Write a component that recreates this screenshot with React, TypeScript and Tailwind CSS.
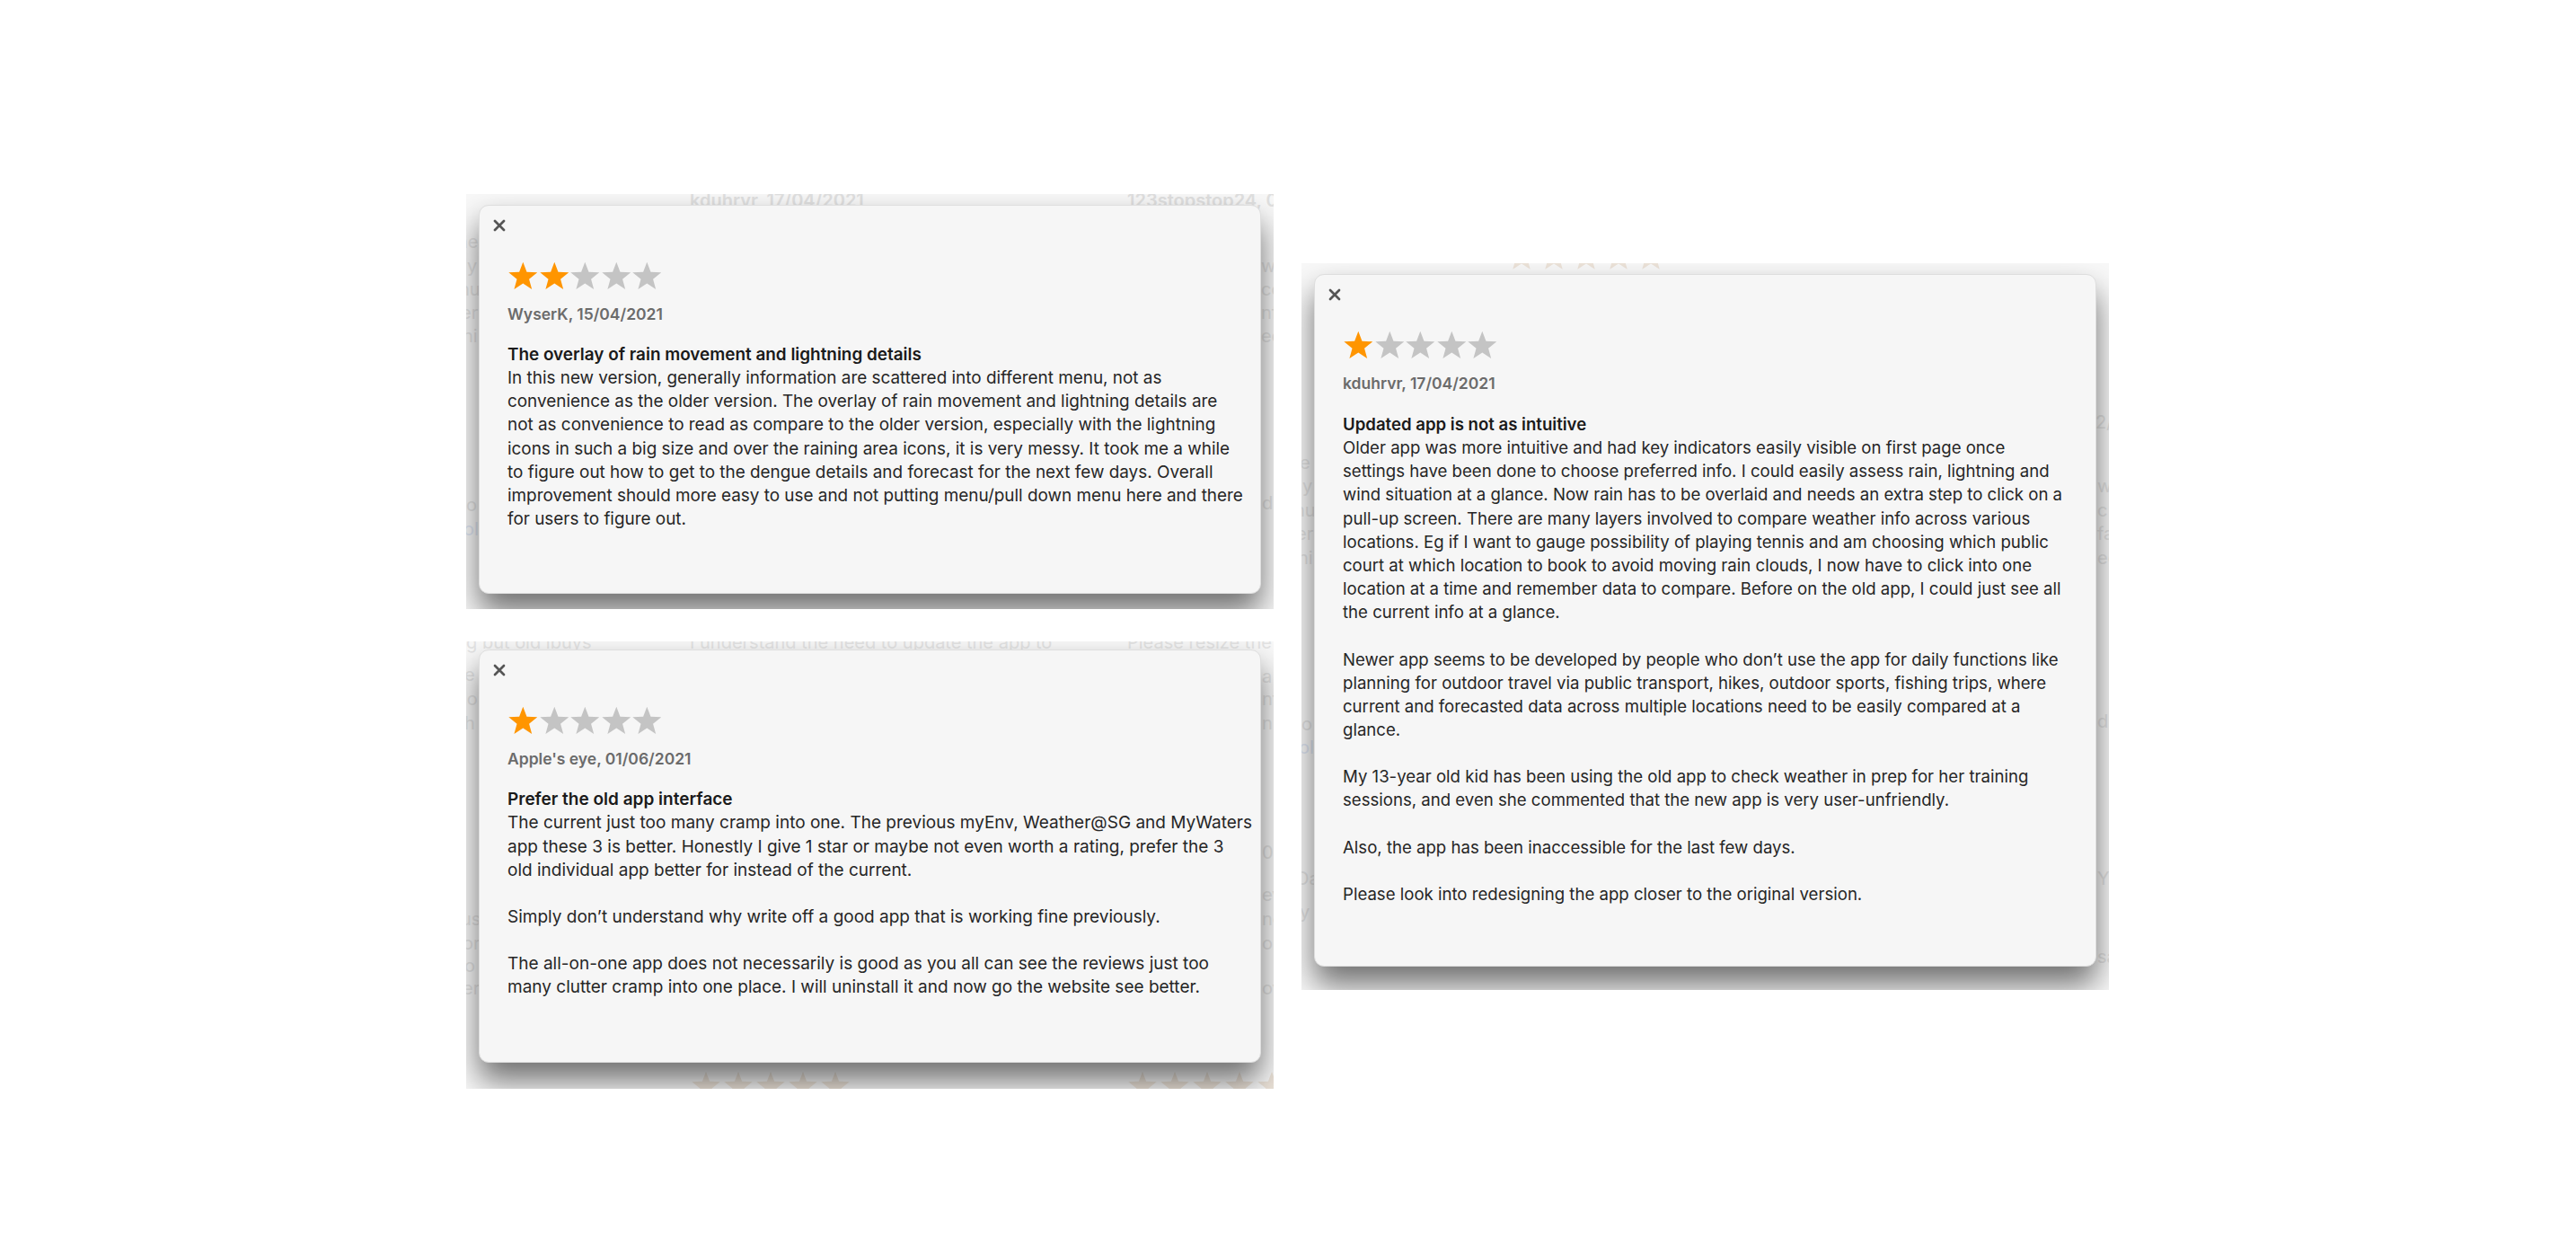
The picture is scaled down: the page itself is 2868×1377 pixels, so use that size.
import React from "react";

type Review = {
  rating: number;
  meta: string;
  title: string;
  lines: string[];
};

type Frag = { t: string; x: number; y: number; bold?: boolean; blue?: boolean };

const reviews: Record<string, Review> = {
  a: {
    rating: 2,
    meta: "WyserK, 15/04/2021",
    title: "The overlay of rain movement and lightning details",
    lines: [
      "In this new version, generally information are scattered into different menu, not as",
      "convenience as the older version. The overlay of rain movement and lightning details are",
      "not as convenience to read as compare to the older version, especially with the lightning",
      "icons in such a big size and over the raining area icons, it is very messy. It took me a while",
      "to figure out how to get to the dengue details and forecast for the next few days. Overall",
      "improvement should more easy to use and not putting menu/pull down menu here and there",
      "for users to figure out.",
    ],
  },
  b: {
    rating: 1,
    meta: "Apple's eye, 01/06/2021",
    title: "Prefer the old app interface",
    lines: [
      "The current just too many cramp into one. The previous myEnv, Weather@SG and MyWaters",
      "app these 3 is better. Honestly I give 1 star or maybe not even worth a rating, prefer the 3",
      "old individual app better for instead of the current.",
      "",
      "Simply don\u2019t understand why write off a good app that is working fine previously.",
      "",
      "The all-on-one app does not necessarily is good as you all can see the reviews just too",
      "many clutter cramp into one place. I will uninstall it and now go the website see better.",
    ],
  },
  c: {
    rating: 1,
    meta: "kduhrvr, 17/04/2021",
    title: "Updated app is not as intuitive",
    lines: [
      "Older app was more intuitive and had key indicators easily visible on first page once",
      "settings have been done to choose preferred info. I could easily assess rain, lightning and",
      "wind situation at a glance. Now rain has to be overlaid and needs an extra step to click on a",
      "pull-up screen. There are many layers involved to compare weather info across various",
      "locations. Eg if I want to gauge possibility of playing tennis and am choosing which public",
      "court at which location to book to avoid moving rain clouds, I now have to click into one",
      "location at a time and remember data to compare. Before on the old app, I could just see all",
      "the current info at a glance.",
      "",
      "Newer app seems to be developed by people who don\u2019t use the app for daily functions like",
      "planning for outdoor travel via public transport, hikes, outdoor sports, fishing trips, where",
      "current and forecasted data across multiple locations need to be easily compared at a",
      "glance.",
      "",
      "My 13-year old kid has been using the old app to check weather in prep for her training",
      "sessions, and even she commented that the new app is very user-unfriendly.",
      "",
      "Also, the app has been inaccessible for the last few days.",
      "",
      "Please look into redesigning the app closer to the original version.",
    ],
  },
};

const STAR = "17.5,0.5 21.73,11.68 33.67,12.25 24.35,19.72 27.49,31.25 17.5,24.7 7.51,31.25 10.65,19.72 1.33,12.25 13.27,11.68";

function Star({ filled }: { filled: boolean }) {
  return (
    <svg viewBox="0 0 35 32" className="w-[34.6px] h-[32px] shrink-0">
      <polygon points={STAR} fill={filled ? "#ff9500" : "#c4c4c4"} />
    </svg>
  );
}

function CloseIcon() {
  return (
    <svg viewBox="0 0 14 14" className="w-[14px] h-[14px]">
      <path d="M2 2 L12 12 M12 2 L2 12" stroke="#555555" strokeWidth="2.7" strokeLinecap="round" />
    </svg>
  );
}

function Card({ r, body, pb }: { r: Review; body: string; pb: string }) {
  return (
    <div
      className={`relative z-10 w-[871px] rounded-[11px] bg-[#f6f6f6] border border-[#dedede] pl-[15px] pr-[20px] pt-[15px] ${pb} shadow-[0_20px_34px_rgba(0,0,0,0.55)]`}
    >
      <div className="h-[14px] flex items-center">
        <CloseIcon />
      </div>
      <div className="pl-[16px]">
        <div className="mt-[33px] flex">
          {[0, 1, 2, 3, 4].map((i) => (
            <Star key={i} filled={i < r.rating} />
          ))}
        </div>
        <div className="mt-[16px] h-[22px] leading-[22px] text-[17.5px] font-semibold text-[#6b6b6b] whitespace-nowrap">
          {r.meta}
        </div>
        <div className={`mt-[21px] ${body} leading-[26.15px] text-[#262626]`}>
          <div className="font-semibold text-[#1a1a1a] whitespace-nowrap">{r.title}</div>
          {r.lines.map((l, i) =>
            l === "" ? (
              <div key={i} className="h-[26.15px]" />
            ) : (
              <div key={i} className="whitespace-nowrap">
                {l}
              </div>
            )
          )}
        </div>
      </div>
    </div>
  );
}

function FaintStars({ x, y }: { x: number; y: number }) {
  return (
    <div className="absolute z-0 flex gap-[2px]" style={{ left: x, top: y }} aria-hidden>
      {[0, 1, 2, 3, 4].map((i) => (
        <svg key={i} viewBox="0 0 35 32" className="w-[34px] h-[32px]">
          <polygon points={STAR} fill="#ece3d9" />
        </svg>
      ))}
    </div>
  );
}

function Backdrop({
  r,
  pt,
  pb,
  cardPb,
  body,
  frags,
  stars,
}: {
  r: Review;
  pt: string;
  pb: string;
  cardPb: string;
  body: string;
  frags: Frag[];
  stars: { x: number; y: number }[];
}) {
  return (
    <div className={`relative w-[899px] px-[14px] ${pt} ${pb} overflow-hidden bg-[#f8f8f8]`}>
      {frags.map((f, i) => (
        <div
          key={i}
          aria-hidden
          className={`absolute z-0 whitespace-nowrap text-[20px] leading-[26px] ${
            f.bold ? "font-semibold text-[#e0e0e0]" : f.blue ? "text-[#dfe6f2]" : "text-[#e3e3e3]"
          }`}
          style={{ left: f.x, top: f.y }}
        >
          {f.t}
        </div>
      ))}
      {stars.map((s, i) => (
        <FaintStars key={i} x={s.x} y={s.y} />
      ))}
      <Card r={r} body={body} pb={cardPb} />
    </div>
  );
}

// fragments positioned relative to each backdrop's top-left corner
const fragsA: Frag[] = [
  { t: "kduhrvr, 17/04/2021", x: 249, y: -6, bold: true },
  { t: "123stopstop24, 02/05/2021", x: 736, y: -6, bold: true },
  { t: "ne", x: -10, y: 40 },
  { t: "ly", x: -4, y: 67 },
  { t: "nu", x: -8, y: 93 },
  { t: "er", x: -6, y: 119 },
  { t: "ni", x: -4, y: 145 },
  { t: "o", x: 0, y: 333 },
  { t: "ol", x: -3, y: 360, blue: true },
  { t: "we", x: 885, y: 67 },
  { t: "ce", x: 885, y: 93 },
  { t: "nfa", x: 885, y: 119 },
  { t: "ed", x: 885, y: 145 },
  { t: "d", x: 886, y: 331 },
];

const fragsB: Frag[] = [
  { t: "g but old lbuys", x: 0, y: -12 },
  { t: "I understand the need to update the app to", x: 249, y: -12 },
  { t: "Please resize the lo", x: 736, y: -12 },
  { t: "e", x: -2, y: 24 },
  { t: "io", x: -4, y: 51 },
  { t: "h", x: -2, y: 78 },
  { t: "us", x: -6, y: 296 },
  { t: "or", x: -4, y: 323 },
  { t: "o", x: -2, y: 348 },
  { t: "er", x: -4, y: 373 },
  { t: "a", x: 886, y: 26 },
  { t: "nt", x: 886, y: 51 },
  { t: "n", x: 886, y: 78 },
  { t: "0", x: 886, y: 222 },
  { t: "ev", x: 886, y: 269 },
  { t: "nc", x: 886, y: 296 },
  { t: "or", x: 886, y: 323 },
  { t: "ov", x: 886, y: 373 },
];

const fragsC: Frag[] = [
  { t: "e", x: -2, y: 209 },
  { t: "ly", x: -4, y: 235 },
  { t: "nu", x: -8, y: 262 },
  { t: "er", x: -6, y: 288 },
  { t: "ni", x: -4, y: 315 },
  { t: "o", x: 0, y: 500 },
  { t: "ol", x: -3, y: 526, blue: true },
  { t: "Da", x: -6, y: 672 },
  { t: "y", x: -2, y: 709 },
  { t: "2/0", x: 884, y: 164 },
  { t: "we", x: 886, y: 235 },
  { t: "c", x: 886, y: 262 },
  { t: "fa", x: 886, y: 288 },
  { t: "ed", x: 886, y: 315 },
  { t: "d", x: 886, y: 497 },
  { t: "Y", x: 886, y: 672 },
  { t: "sa", x: 886, y: 759 },
];

export default function App() {
  return (
    <div
      className="w-[2868px] h-[1377px] bg-white overflow-hidden flex items-start gap-[31px] pl-[519px] pt-[216px]"
      style={{ fontFamily: "Inter, 'Noto Sans', 'Liberation Sans', sans-serif" }}
    >
      <div className="flex flex-col gap-[36px]">
        <Backdrop
          r={reviews.a}
          pt="pt-[12px]"
          pb="pb-[17px]"
          cardPb="pb-[69px]"
          body="text-[18.9px]"
          frags={fragsA}
          stars={[]}
        />
        <Backdrop
          r={reviews.b}
          pt="pt-[9px]"
          pb="pb-[29px]"
          cardPb="pb-[69px]"
          body="text-[19px]"
          frags={fragsB}
          stars={[{ x: 250, y: 478 }, { x: 736, y: 478 }]}
        />
      </div>
      <div className="mt-[77px]">
        <Backdrop
          r={reviews.c}
          pt="pt-[12px]"
          pb="pb-[26px]"
          cardPb="pb-[67px]"
          body="text-[18.6px]"
          frags={fragsC}
          stars={[{ x: 228, y: -24 }]}
        />
      </div>
    </div>
  );
}
